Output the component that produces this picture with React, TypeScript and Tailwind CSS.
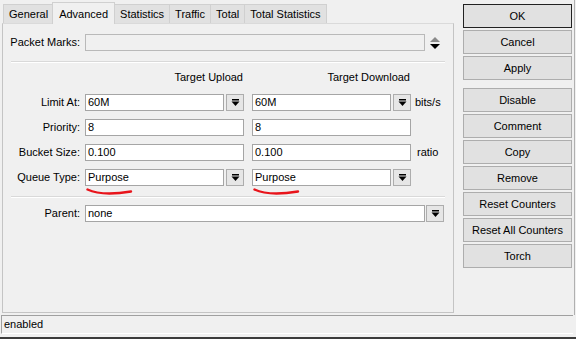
const font = { fontFamily: '"Liberation Sans", Arial, sans-serif' };

function DropArrow() {
  return (
    <svg width="9" height="8" viewBox="0 0 9 8">
      <rect x="1" y="0" width="7" height="1.5" fill="#000" />
      <polygon points="0.5,2.5 8.5,2.5 4.5,7" fill="#000" />
    </svg>
  );
}

function Field({
  value = "",
  className = "",
  muted = false,
}: {
  value?: string;
  className?: string;
  muted?: boolean;
}) {
  return (
    <div
      className={
        "h-[17px] border px-[2px] flex items-center text-[11px] text-black leading-none " +
        (muted ? "bg-[#f0f0f0] border-[#b9b9b9] " : "bg-white border-[#a5a5a5] ") +
        className
      }
    >
      {value}
    </div>
  );
}

function DropBtn() {
  return (
    <div className="w-[18px] h-[17px] ml-[2px] shrink-0 bg-[#e6e6e6] border border-[#adadad] flex items-center justify-center">
      <DropArrow />
    </div>
  );
}

function Combo({ value }: { value: string }) {
  return (
    <div className="flex w-[159px]">
      <Field value={value} className="flex-1" />
      <DropBtn />
    </div>
  );
}

function Row({ label, children }: { label: string; children: React.ReactNode }) {
  return (
    <div className="flex items-center h-[17px]">
      <div className="w-[77px] text-right text-[11px] text-black">{label}</div>
      <div className="ml-[5px] flex items-center">{children}</div>
    </div>
  );
}

function Underline() {
  return (
    <svg width="48" height="9" viewBox="0 0 48 9" className="absolute">
      <path d="M1.5 1.5 C 10 5.5, 24 7, 45 3.5" stroke="#e8141b" strokeWidth="2.4" fill="none" strokeLinecap="round" />
    </svg>
  );
}

const tabs = ["General", "Advanced", "Statistics", "Traffic", "Total", "Total Statistics"];
const buttons = [
  "OK",
  "Cancel",
  "Apply",
  "",
  "Disable",
  "Comment",
  "Copy",
  "Remove",
  "Reset Counters",
  "Reset All Counters",
  "Torch",
];

export default function App() {
  return (
    <div style={font} className="w-[576px] h-[339px] bg-[#f0f0f0] flex flex-col overflow-hidden text-black">
      <div className="flex flex-1">
        {/* tabs + panel */}
        <div className="w-[454px] pl-[2px] pt-[1px] flex flex-col">
          <div className="flex items-end h-[22px] pl-[1px]">
            {tabs.map((t) =>
              t === "Advanced" ? (
                <div
                  key={t}
                  className="h-[22px] px-[6px] bg-[#f0f0f0] border border-b-0 border-[#d0d0d0] text-[11px] flex items-start pt-[3px] relative z-10 -mb-[1px] -mx-[1px]"
                >
                  {t}
                </div>
              ) : (
                <div
                  key={t}
                  className="h-[19px] px-[5px] bg-[#e1e1e1] border border-b-0 border-r-0 last:border-r border-[#d0d0d0] text-[11px] flex items-center pt-[1px]"
                >
                  {t}
                </div>
              )
            )}
          </div>
          <div className="h-[290px] border border-[#c4c4c4] border-t-[#dadada] flex flex-col">
            <div className="mt-[10px]">
              <Row label="Packet Marks:">
                <Field muted className="w-[340px]" />
                <svg width="12" height="14" viewBox="0 0 12 14" className="ml-[4px]">
                  <polygon points="6,1 11,6 1,6" fill="#8a8a8a" />
                  <polygon points="1,8 11,8 6,13" fill="#000" />
                </svg>
              </Row>
            </div>
            <div className="mx-[8px] mt-[10px] border-t border-[#d9d9d9] border-b border-b-white" />
            <div className="flex mt-[6px] h-[14px] text-[11px]">
              <div className="w-[240px] text-right">Target Upload</div>
              <div className="w-[167px] text-right">Target Download</div>
            </div>
            <div className="mt-[11px] flex flex-col gap-[8px]">
              <Row label="Limit At:">
                <Combo value="60M" />
                <div className="w-[8px]" />
                <Combo value="60M" />
                <span className="ml-[4px] text-[11px]">bits/s</span>
              </Row>
              <Row label="Priority:">
                <Field value="8" className="w-[159px]" />
                <div className="w-[8px]" />
                <Field value="8" className="w-[159px]" />
              </Row>
              <Row label="Bucket Size:">
                <Field value="0.100" className="w-[159px]" />
                <div className="w-[8px]" />
                <Field value="0.100" className="w-[159px]" />
                <span className="ml-[6px] text-[11px]">ratio</span>
              </Row>
              <Row label="Queue Type:">
                <div className="relative flex">
                  <Combo value="Purpose" />
                  <div className="absolute left-[1px] top-[19px]">
                    <Underline />
                  </div>
                </div>
                <div className="w-[8px]" />
                <div className="relative flex">
                  <Combo value="Purpose" />
                  <div className="absolute left-[1px] top-[19px]">
                    <Underline />
                  </div>
                </div>
              </Row>
            </div>
            <div className="mx-[8px] mt-[10px] border-t border-[#d9d9d9] border-b border-b-white" />
            <div className="mt-[7px]">
              <Row label="Parent:">
                <Field value="none" className="w-[340px]" />
                <div className="-ml-[1px] flex">
                  <DropBtn />
                </div>
              </Row>
            </div>
          </div>
        </div>

        {/* buttons */}
        <div className="flex flex-col pl-[9px] pt-[4px] gap-[2px]">
          {buttons.map((b, i) =>
            b === "" ? (
              <div key={i} className="h-[4px]" />
            ) : (
              <div
                key={i}
                className={
                  "w-[109px] h-[24px] flex items-center justify-center text-[11px] bg-[#e1e1e1] border " +
                  (b === "OK" ? "border-[#222]" : "border-[#adadad]")
                }
              >
                {b}
              </div>
            )
          )}
        </div>
        <div className="flex-1 border-r border-[#b0b0b0] mr-[1px]" />
      </div>

      {/* status bar */}
      <div className="h-[19px] ml-[1px] mr-[3px] mb-[3px] border-t border-l border-[#a0a0a0] border-b border-b-white flex items-center px-[2px] text-[11px]">
        enabled
      </div>
      <div className="h-[2px] bg-[#3c3c3c]" />
    </div>
  );
}
